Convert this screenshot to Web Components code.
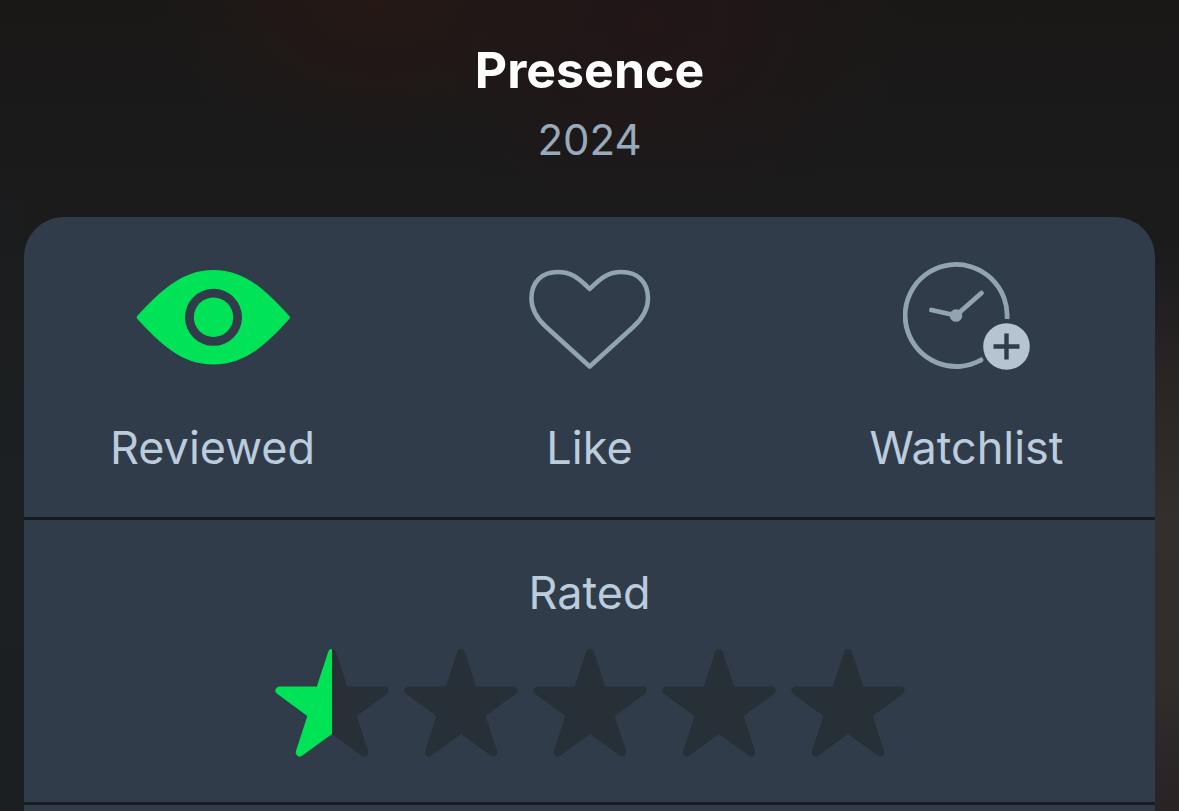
<!DOCTYPE html>
<html lang="en">
<head>
<meta charset="utf-8">
<meta name="viewport" content="width=device-width, initial-scale=1">
<title>Presence (2024)</title>
<style>
  html { background: #1b1b1c; }
  body { margin: 0; font-family: Inter, "Liberation Sans", sans-serif; }
</style>
</head>
<body>
<film-sheet>
  <film-heading slot="heading" name="Presence" year="2024"></film-heading>
  <action-panel>
    <action-bar slot="row">
      <film-action icon="eye">Reviewed</film-action>
      <film-action icon="heart">Like</film-action>
      <film-action icon="clock">Watchlist</film-action>
    </action-bar>
    <star-rating slot="row" value="0.5">Rated</star-rating>
  </action-panel>
</film-sheet>

<script>
class FilmSheet extends HTMLElement {
  constructor() {
    super();
    this.attachShadow({ mode: "open" }).innerHTML = `
      <style>
        :host {
          display: flex; flex-direction: column; box-sizing: border-box;
          min-height: 100vh; padding: 40px 24px 0;
          background:
            linear-gradient(to bottom, transparent 30%, #2a2624 48%, #322f2d 64%, #302d2b 84%, #292323 100%) right / 24px 100% no-repeat,
            linear-gradient(to bottom, transparent 20%, #1c2022 60%, #1b1f21 100%) left / 24px 100% no-repeat,
            radial-gradient(ellipse 220px 150px at 32% 0, #251815, transparent),
            radial-gradient(ellipse 260px 200px at 55% 3%, #221617, transparent),
            linear-gradient(to bottom, #1a1817, #1b1b1c 200px);
        }
      </style>
      <slot name="heading"></slot>
      <slot></slot>`;
  }
}

class FilmHeading extends HTMLElement {
  connectedCallback() {
    if (this.shadowRoot) return;
    this.attachShadow({ mode: "open" }).innerHTML = `
      <style>
        :host { display: flex; flex-direction: column; gap: 10px; padding-bottom: 47px; text-align: center; }
        h1, p { margin: 0; line-height: 60px; }
        h1 { font-size: 50px; font-weight: 700; color: #fff; }
        p { font-size: 42px; font-weight: 400; color: #9ab; }
      </style>
      <h1></h1>
      <p></p>`;
    this.shadowRoot.querySelector("h1").textContent = this.getAttribute("name");
    this.shadowRoot.querySelector("p").textContent = this.getAttribute("year");
  }
}

class ActionPanel extends HTMLElement {
  constructor() {
    super();
    this.attachShadow({ mode: "open" }).innerHTML = `
      <style>
        :host {
          display: flex; flex-direction: column; flex: 1;
          border-radius: 40px 40px 0 0; background: #313c4a; color: #bcd;
        }
        ::slotted(*) { border-bottom: 3px solid #171b20; }
      </style>
      <slot name="row"></slot>`;
  }
}

class ActionBar extends HTMLElement {
  constructor() {
    super();
    this.attachShadow({ mode: "open" }).innerHTML = `
      <style>:host { display: grid; grid-template-columns: repeat(3, 1fr); }</style>
      <slot></slot>`;
  }
}

const ICONS = {
  eye: `<svg width="154" height="108" viewBox="0 0 154 108" aria-hidden="true">
    <path fill="#00e356" fill-rule="evenodd" d="M1.200 54C24.500 29 45.500 8 77.500 8s53 21 76 46.200q.8 1.300 0 2.600C130.500 82 109.500 102.600 77.500 102.600S24.500 82 1.200 56.800q-1-1.400 0-2.800ZM77.500 26.800a28.500 28.500 0 1 0 0 57 28.500 28.500 0 0 0 0-57Z"/>
    <circle cx="77.500" cy="55.300" r="19.700" fill="#00e356"/></svg>`,
  heart: `<svg width="124" height="108" viewBox="0 0 124 108" fill="none" stroke="#91a4b0" stroke-width="4.500" stroke-linejoin="round" aria-hidden="true">
    <path d="M61.700 104.500 18.200 65C7.700 55.500 3.400 47 3.400 36.500 3.400 20 13.700 10 29.700 10 43.200 10 50.200 15.500 61.700 27 73.200 15.500 80.200 10 93.700 10c16 0 26.300 10 26.300 26.500 0 10.500-4.300 19-14.800 28.500Z"/></svg>`,
  clock: `<svg width="128" height="108" viewBox="1 0 128 108" aria-hidden="true">
    <g fill="none" stroke="#91a4b0" stroke-width="4.800" stroke-linecap="round">
      <path stroke-linecap="butt" d="M105 57A51 51 0 1 0 79 98"/>
      <path d="M79 98l.1-.1M29.500 48 54 53.500 79.500 31"/>
    </g>
    <circle cx="54" cy="53.500" r="6.300" fill="#91a4b0"/>
    <circle cx="104.500" cy="84.500" r="23.300" fill="#b6c3d0"/>
    <path fill="none" stroke="#313c4a" stroke-width="4.400" d="M91.500 84.500h26M104.500 71.500v26"/></svg>`
};

class FilmAction extends HTMLElement {
  connectedCallback() {
    if (this.shadowRoot) return;
    const icon = this.getAttribute("icon");
    this.attachShadow({ mode: "open" }).innerHTML = `
      <style>
        :host { display: block; }
        button {
          display: flex; flex-direction: column; align-items: center; gap: 48px;
          width: 100%; margin: 0; padding: 45px 0 39px; border: 0; background: none;
          font: inherit; font-size: 45px; font-weight: 400; line-height: 60px;
          color: inherit; cursor: pointer;
        }
        svg { display: block; }
      </style>
      <button type="button">${ICONS[icon]}<span><slot></slot></span></button>`;
  }
}

const STAR_PATH = "M57 4 69.300 41.500H109.600L77 65.500 89.300 103.500 57 80 24.700 103.500 37 65.500 4.400 41.500H44.700Z";

class StarRating extends HTMLElement {
  connectedCallback() {
    if (this.shadowRoot) return;
    const star = i => `
      <svg width="114" height="108" viewBox="0 0 114 108" aria-hidden="true">
        <clipPath id="c${i}"><rect width="0" height="108"/></clipPath>
        <path d="${STAR_PATH}"/>
        <path class="lit" clip-path="url(#c${i})" d="${STAR_PATH}"/>
      </svg>`;
    this.attachShadow({ mode: "open" }).innerHTML = `
      <style>
        :host { display: flex; flex-direction: column; align-items: center; gap: 26px; padding: 43px 0 45px; }
        label { font-size: 45px; font-weight: 400; line-height: 60px; }
        .stars { position: relative; display: flex; gap: 15px; }
        svg { display: block; }
        path { fill: #283037; stroke: #283037; stroke-width: 8px; stroke-linejoin: round; }
        .lit { fill: #00e356; stroke: #00e356; }
        input { position: absolute; inset: 0; width: 100%; height: 100%; margin: 0; opacity: 0; cursor: pointer; }
      </style>
      <label for="rating"><slot></slot></label>
      <div class="stars">
        ${[0, 1, 2, 3, 4].map(star).join("")}
        <input id="rating" type="range" min="0" max="5" step="0.5" value="${this.getAttribute("value")}">
      </div>`;
    const input = this.shadowRoot.querySelector("input");
    const paint = () => this.shadowRoot.querySelectorAll("rect").forEach((rect, i) => {
      rect.setAttribute("width", 114 * Math.max(0, Math.min(1, input.value - i)));
    });
    input.addEventListener("input", paint);
    paint();
  }
}

customElements.define("film-sheet", FilmSheet);
customElements.define("film-heading", FilmHeading);
customElements.define("action-panel", ActionPanel);
customElements.define("action-bar", ActionBar);
customElements.define("film-action", FilmAction);
customElements.define("star-rating", StarRating);
</script>
</body>
</html>
